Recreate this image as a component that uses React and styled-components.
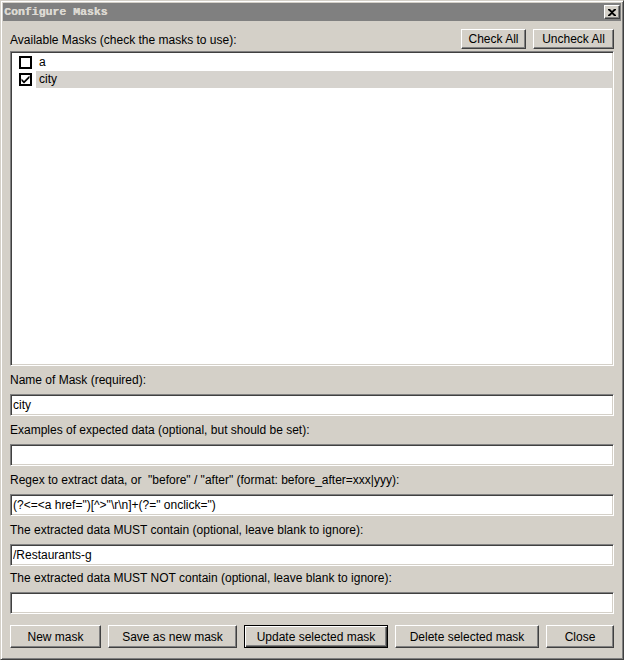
import React from 'react';
import styled, { createGlobalStyle, css } from 'styled-components';

const Global = createGlobalStyle`
  html, body { margin: 0; padding: 0; background: #d4d0c8; }
  body {
    width: 624px;
    height: 660px;
    overflow: hidden;
    font-family: "Liberation Sans", Arial, sans-serif;
    font-size: 12px;
    color: #000;
  }
  * { box-sizing: border-box; }
`;

const face = '#d4d0c8';

const raised = css`
  border: 1px solid;
  border-color: #ffffff #404040 #404040 #ffffff;
  box-shadow: inset -1px -1px #808080;
`;

const sunken = css`
  border: 1px solid;
  border-color: #808080 #ffffff #ffffff #808080;
  box-shadow: inset 1px 1px #404040, inset -1px -1px ${face};
`;

const Window = styled.div`
  width: 624px;
  height: 660px;
  background: ${face};
  border: 1px solid;
  border-color: ${face} #404040 #404040 ${face};
  box-shadow: inset 1px 1px #ffffff, inset -1px -1px #808080;
  padding: 2px;
  display: flex;
  flex-direction: column;
`;

const TitleBar = styled.div`
  height: 18px;
  background: #808080;
  display: flex;
  align-items: center;
  justify-content: space-between;
  padding: 0 1px 0 1px;
`;

const TitleText = styled.span`
  font-family: "Liberation Mono", "Courier New", monospace;
  font-weight: bold;
  font-size: 11.5px;
  color: #dcd9d2;
  line-height: 18px;
  white-space: pre;
  text-shadow: 0.4px 0 0 #dcd9d2;
`;

const CloseButton = styled.button`
  ${raised};
  width: 16px;
  height: 14px;
  padding: 0;
  margin: 0;
  background: ${face};
  display: flex;
  align-items: center;
  justify-content: center;
`;

const Body = styled.div`
  flex: 1;
  display: flex;
  flex-direction: column;
  padding: 8px 7px 0 7px;
`;

const HeaderRow = styled.div`
  display: flex;
  align-items: center;
  height: 20px;
  gap: 7px;
`;

const HeaderLabel = styled.span`
  flex: 1;
  line-height: 14px;
  padding-top: 1px;
`;

const Button = styled.button`
  ${raised};
  width: ${(p) => p.$w}px;
  height: ${(p) => p.$h || 23}px;
  padding: 0;
  margin: 0;
  background: ${face};
  font-family: "Liberation Sans", Arial, sans-serif;
  font-size: 12px;
  color: #000;
  white-space: nowrap;
  ${(p) =>
    p.$focused &&
    css`
      border: 1px solid #000;
      box-shadow: inset 1px 1px #ffffff, inset -1px -1px #404040, inset -2px -2px #808080;
    `}
`;

const MaskList = styled.div`
  ${sunken};
  margin-top: 2px;
  height: 315px;
  background: #ffffff;
  padding: 2px 1px 2px 2px;
  display: flex;
  flex-direction: column;
`;

const MaskRow = styled.div`
  display: flex;
  align-items: center;
  height: 17px;
  padding-left: 6px;
`;

const Box = styled.span`
  width: 13px;
  height: 13px;
  border: 2px solid #000;
  background: #ffffff;
  display: flex;
  align-items: center;
  justify-content: center;
  flex: none;
`;

const MaskName = styled.span`
  flex: 1;
  margin-left: 4px;
  height: 17px;
  line-height: 17px;
  padding-left: 3px;
  background: ${(p) => (p.$selected ? '#d6d3ce' : 'transparent')};
`;

const FieldLabel = styled.div`
  margin-top: ${(p) => (p.$tight ? 5 : 7)}px;
  margin-bottom: 7px;
  line-height: 14px;
  white-space: pre;
`;

const TextField = styled.input`
  ${sunken};
  width: 100%;
  height: 22px;
  margin: 0;
  padding: 0 2px 0 2px;
  background: #ffffff;
  font-family: "Liberation Sans", Arial, sans-serif;
  font-size: 12px;
  color: #000;
  outline: none;
`;

const Footer = styled.div`
  margin-top: 11px;
  display: flex;
  gap: 7px;
`;

function CheckBox({ checked }) {
  return (
    <Box>
      {checked && (
        <svg width="9" height="9" viewBox="0 0 9 9">
          <path d="M0.5 3.5 L3 6 L8.5 0.5 L8.5 3 L3 8.5 L0.5 6 Z" fill="#000" />
        </svg>
      )}
    </Box>
  );
}

const masks = [
  { name: 'a', checked: false, selected: false },
  { name: 'city', checked: true, selected: true },
];

const fields = [
  { label: 'Name of Mask (required):', value: 'city' },
  { label: 'Examples of expected data (optional, but should be set):', value: '' },
  {
    label: 'Regex to extract data, or  "before" / "after" (format: before_after=xxx|yyy):',
    value: '(?<=<a href=")[^>"\\r\\n]+(?=" onclick=")',
  },
  { label: 'The extracted data MUST contain (optional, leave blank to ignore):', value: '/Restaurants-g' },
  { label: 'The extracted data MUST NOT contain (optional, leave blank to ignore):', value: '', tight: true },
];

const actions = [
  { text: 'New mask', w: 91 },
  { text: 'Save as new mask', w: 129 },
  { text: 'Update selected mask', w: 144, focused: true },
  { text: 'Delete selected mask', w: 144 },
  { text: 'Close', w: 68 },
];

export default function App() {
  return (
    <>
      <Global />
      <Window>
        <TitleBar>
          <TitleText>Configure Masks</TitleText>
          <CloseButton aria-label="Close">
            <svg width="8" height="7" viewBox="0 0 8 7">
              <path d="M0 0h2l2 2 2-2h2v1L5 3.5 8 6v1H6L4 5 2 7H0V6l3-2.5L0 1z" fill="#000" />
            </svg>
          </CloseButton>
        </TitleBar>
        <Body>
          <HeaderRow>
            <HeaderLabel>Available Masks (check the masks to use):</HeaderLabel>
            <Button $w={65} $h={20}>Check All</Button>
            <Button $w={81} $h={20}>Uncheck All</Button>
          </HeaderRow>
          <MaskList>
            {masks.map((m) => (
              <MaskRow key={m.name}>
                <CheckBox checked={m.checked} />
                <MaskName $selected={m.selected}>{m.name}</MaskName>
              </MaskRow>
            ))}
          </MaskList>
          {fields.map((f) => (
            <React.Fragment key={f.label}>
              <FieldLabel $tight={f.tight}>{f.label}</FieldLabel>
              <TextField readOnly value={f.value} />
            </React.Fragment>
          ))}
          <Footer>
            {actions.map((a) => (
              <Button key={a.text} $w={a.w} $focused={a.focused}>
                {a.text}
              </Button>
            ))}
          </Footer>
        </Body>
      </Window>
    </>
  );
}
